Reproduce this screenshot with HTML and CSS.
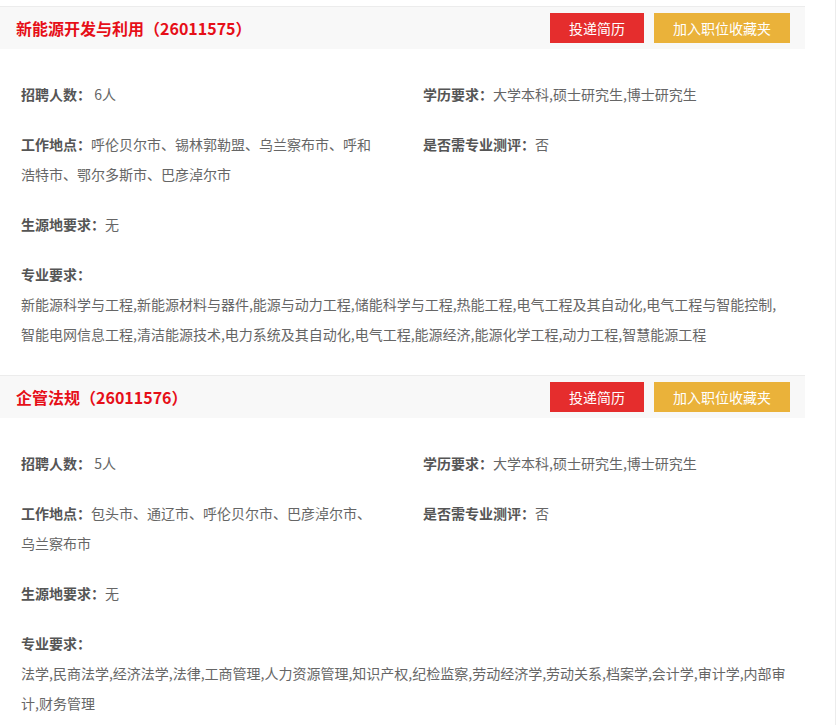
FILE: index.html
```html
<!DOCTYPE html>
<html lang="zh-CN">
<head>
    <meta charset="UTF-8">
    <meta name="viewport" content="width=device-width, initial-scale=1.0">
    <title>职位列表</title>
    <link rel="stylesheet" href="styles.css">
</head>
<body>
    <div class="page">
        <div class="job">
            <div class="job-head">
                <h3 class="job-title">新能源开发与利用（26011575）</h3>
                <div class="job-actions">
                    <button class="btn btn-apply">投递简历</button>
                    <button class="btn btn-fav">加入职位收藏夹</button>
                </div>
            </div>
            <div class="job-body">
                <div class="info-grid">
                    <div class="info-item"><span class="label">招聘人数：</span> 6人</div>
                    <div class="info-item"><span class="label">学历要求：</span>大学本科,硕士研究生,博士研究生</div>
                    <div class="info-item"><span class="label">工作地点：</span>呼伦贝尔市、锡林郭勒盟、乌兰察布市、呼和浩特市、鄂尔多斯市、巴彦淖尔市</div>
                    <div class="info-item"><span class="label">是否需专业测评：</span>否</div>
                    <div class="info-item full"><span class="label">生源地要求：</span>无</div>
                </div>
                <div class="major">
                    <div class="label">专业要求：</div>
                    <p>新能源科学与工程,新能源材料与器件,能源与动力工程,储能科学与工程,热能工程,电气工程及其自动化,电气工程与智能控制,智能电网信息工程,清洁能源技术,电力系统及其自动化,电气工程,能源经济,能源化学工程,动力工程,智慧能源工程</p>
                </div>
            </div>
        </div>

        <div class="job">
            <div class="job-head">
                <h3 class="job-title">企管法规（26011576）</h3>
                <div class="job-actions">
                    <button class="btn btn-apply">投递简历</button>
                    <button class="btn btn-fav">加入职位收藏夹</button>
                </div>
            </div>
            <div class="job-body">
                <div class="info-grid">
                    <div class="info-item"><span class="label">招聘人数：</span> 5人</div>
                    <div class="info-item"><span class="label">学历要求：</span>大学本科,硕士研究生,博士研究生</div>
                    <div class="info-item"><span class="label">工作地点：</span>包头市、通辽市、呼伦贝尔市、巴彦淖尔市、乌兰察布市</div>
                    <div class="info-item"><span class="label">是否需专业测评：</span>否</div>
                    <div class="info-item full"><span class="label">生源地要求：</span>无</div>
                </div>
                <div class="major">
                    <div class="label">专业要求：</div>
                    <p>法学,民商法学,经济法学,法律,工商管理,人力资源管理,知识产权,纪检监察,劳动经济学,劳动关系,档案学,会计学,审计学,内部审计,财务管理</p>
                </div>
            </div>
        </div>
    </div>
</body>
</html>
```

FILE: styles.css
```css
body {
    margin: 0;
    background: #fff;
    font-family: "Microsoft YaHei", "Noto Sans CJK SC", sans-serif;
    font-size: 14px;
    color: #666;
}

.page {
    width: 836px;
    min-height: 100vh;
    padding-top: 6px;
    box-sizing: border-box;
    border-right: 1px solid #ececec;
}

.job {
    width: 805px;
}

.job-head {
    height: 42px;
    border-top: 1px solid #ececec;
    background: #f8f8f8;
    display: flex;
    align-items: center;
    justify-content: space-between;
    padding: 0 15px 0 16px;
}

.job-title {
    margin: 0;
    font-size: 16px;
    font-weight: bold;
    color: #e60f18;
    line-height: 42px;
}

.job-actions {
    display: flex;
    gap: 10px;
}

.btn {
    height: 30px;
    padding: 0 19px;
    border: none;
    font-family: inherit;
    font-size: 14px;
    color: #fff;
    cursor: pointer;
}

.btn-apply {
    background: #e52d2d;
}

.btn-fav {
    background: #eab23a;
}

.job-body {
    padding: 30px 18px 26px 21px;
    line-height: 30px;
}

.info-grid {
    display: grid;
    grid-template-columns: 360px 1fr;
    column-gap: 42px;
    row-gap: 20px;
}

.info-item.full {
    grid-column: 1 / 3;
}

.label {
    font-weight: bold;
    color: #555;
}

.major {
    margin-top: 20px;
}

.major p {
    margin: 0;
}
```
